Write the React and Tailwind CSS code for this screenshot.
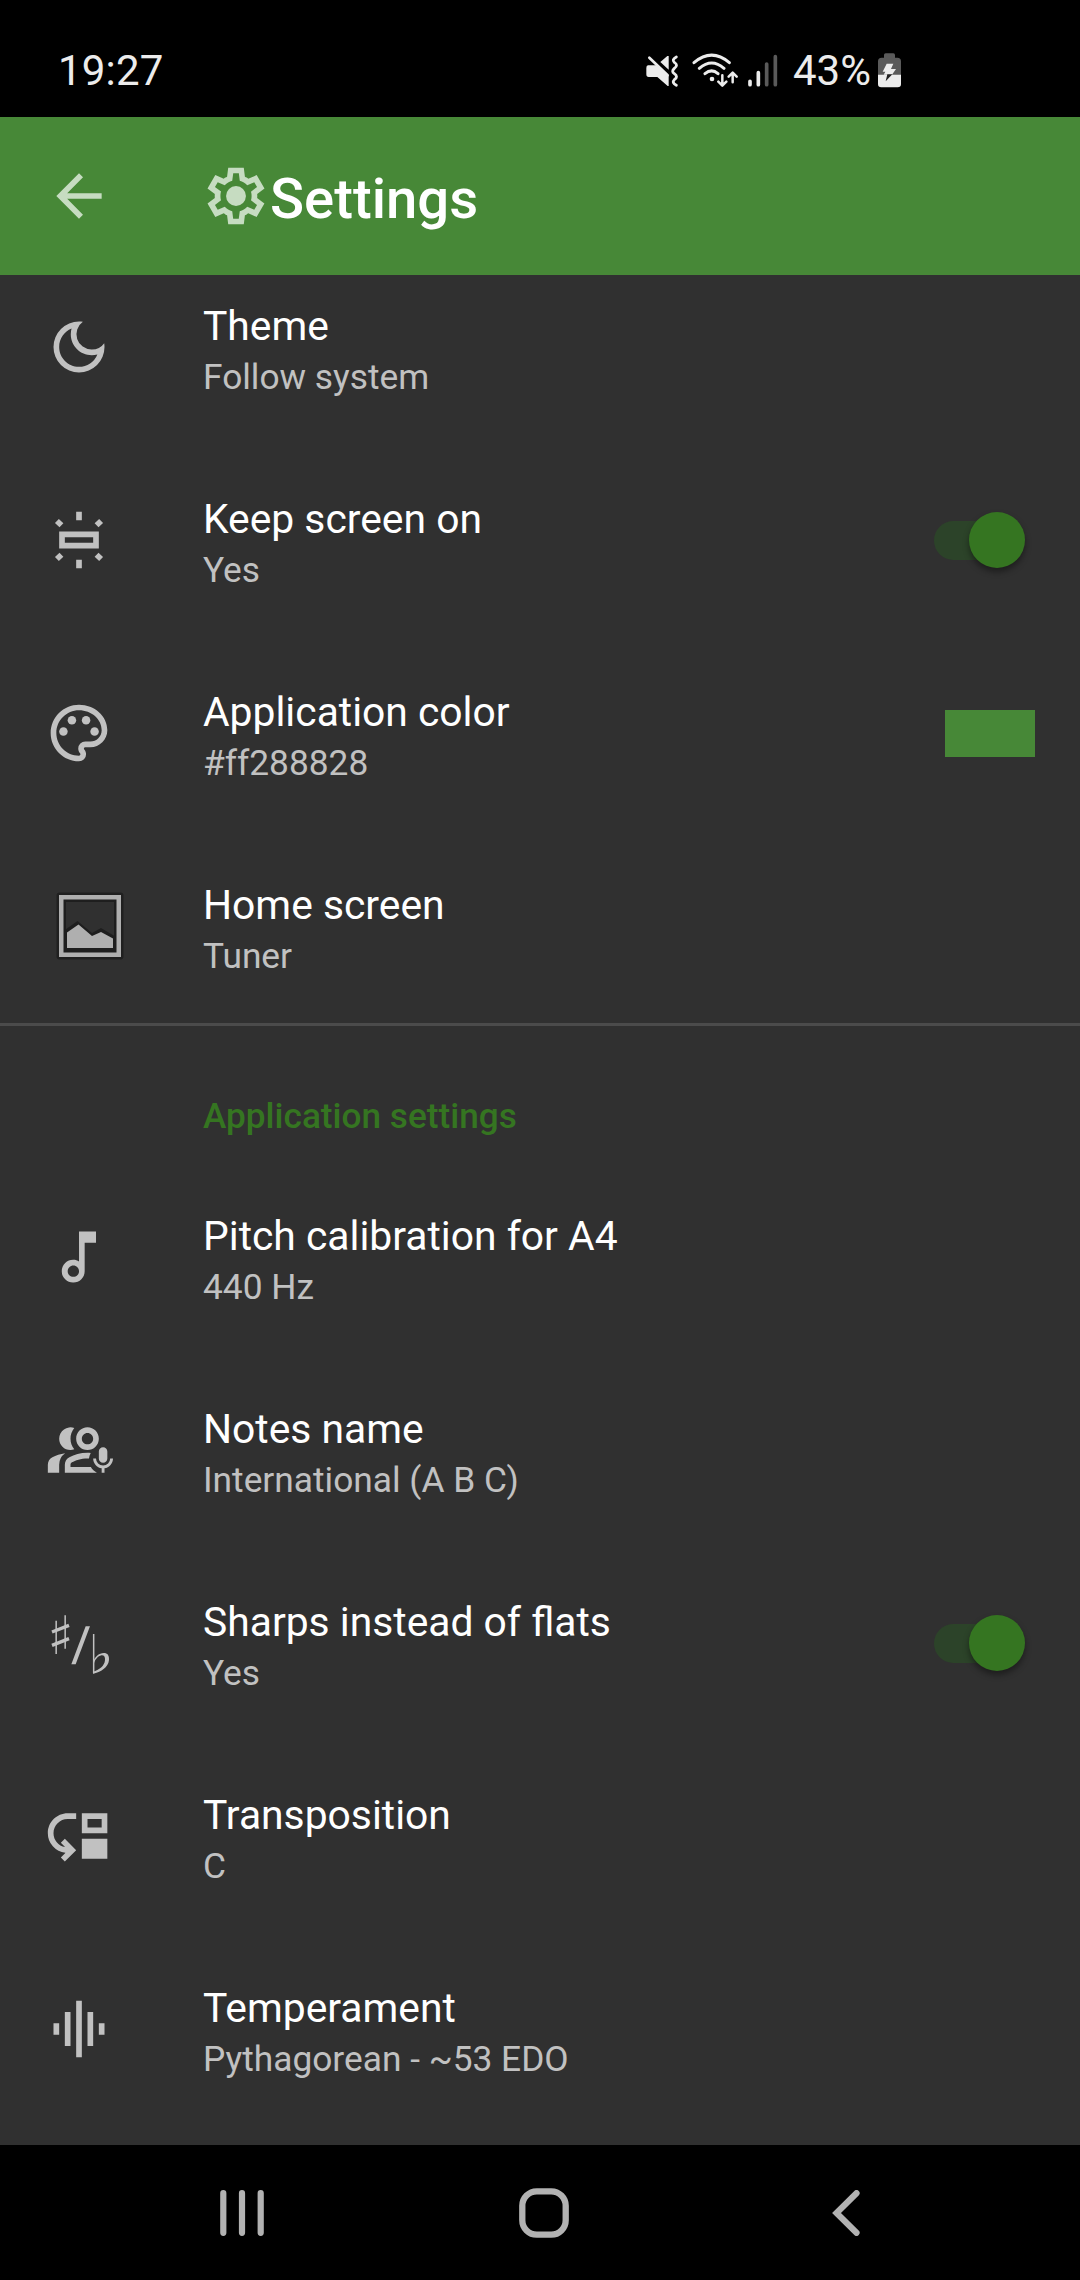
import React from "react";
import {
  MdArrowBack,
  MdOutlineDarkMode,
  MdOutlinePalette,
  MdOutlineMusicNote,
  MdOutlineInterpreterMode,
  MdOutlineMoveDown,
  MdGraphicEq,
} from "react-icons/md";

const ICON = "block h-[68px] w-[68px]";

function GearIcon() {
  return (
    <svg viewBox="0 0 24 24" className={ICON} fill="currentColor">
      <path
        fillRule="evenodd"
        d="m9.25 22-.4-3.2q-.325-.125-.612-.3-.288-.175-.563-.375L4.7 19.375l-2.75-4.75 2.575-1.95Q4.5 12.5 4.5 12.337v-.675q0-.162.025-.337L1.95 9.375l2.75-4.75 2.975 1.25q.275-.2.575-.375.3-.175.6-.3l.4-3.2h5.5l.4 3.2q.325.125.613.3.287.175.562.375l2.975-1.25 2.75 4.75-2.575 1.95q.025.175.025.337v.675q0 .163-.05.338l2.575 1.95-2.75 4.75-2.95-1.25q-.275.2-.575.375-.3.175-.6.3l-.4 3.2ZM11 20h1.975l.35-2.65q.775-.2 1.438-.588.662-.387 1.212-.937l2.475 1.025.975-1.7-2.15-1.625q.125-.35.175-.738.05-.387.05-.787t-.05-.788q-.05-.387-.175-.737l2.15-1.625-.975-1.7-2.475 1.05q-.55-.575-1.212-.963-.663-.387-1.438-.587L13 4h-1.975l-.35 2.65q-.775.2-1.437.587-.663.388-1.213.938L5.55 7.15l-.975 1.7 2.15 1.6q-.125.375-.175.75-.05.375-.05.8 0 .4.05.775t.175.75l-2.15 1.625.975 1.7 2.475-1.05q.55.575 1.213.962.662.388 1.437.588Z"
      />
      <circle cx="12" cy="12" r="3.5" />
    </svg>
  );
}

function ScreenOnIcon() {
  return (
    <svg viewBox="0 0 24 24" className={ICON} fill="none" stroke="currentColor" strokeWidth="2">
      <path d="M6 10h12v4H6zM12 2v3M12 19v3M4.2 5.3l1.6 1.5M19.8 5.3l-1.6 1.5M4.2 18.7l1.6-1.5M19.8 18.7l-1.6-1.5" />
    </svg>
  );
}

function GalleryIcon() {
  return (
    <svg viewBox="0 0 68 68" className="ml-[11px] block h-[68px] w-[68px]">
      <rect x="0.5" y="0.5" width="67" height="67" rx="3" fill="#202020" />
      <rect x="3" y="3" width="62" height="62" fill="#afafaf" />
      <rect x="7.5" y="7.5" width="53" height="53" fill="#1e1e1e" />
      <rect x="10" y="10" width="48" height="48" fill="#303030" />
      <path d="M9.500 37.500 21.500 29 36 41 45 36 58.500 44V59H9.500z" fill="#1e1e1e" />
      <path d="M11 40.500 22.500 32.500 36 44 45 40 57 46.500V56H11z" fill="#afafaf" />
    </svg>
  );
}

function SharpFlatIcon() {
  return (
    <svg viewBox="0 25 204 204" className={ICON} fill="none" stroke="currentColor">
      <path d="M33.500 60v100M60.500 44v100" strokeWidth="4.500" />
      <path d="M21 94 72 74M21 134 72 114" strokeWidth="10" />
      <path d="M79 191h13L135 77h-13z" fill="currentColor" stroke="none" />
      <path d="M146 100V218" strokeWidth="4.500" />
      <path
        d="M145 180C152 168 162 157 176 157 188 157 193 165 192 178 190 200 167 215 144 219V213C162 208 179 196 180 178 181 168 177 163 169 164 159 166 150 177 147 188z"
        fill="currentColor"
        stroke="none"
      />
    </svg>
  );
}

function Toggle() {
  return (
    <div className="mb-[1px] flex h-[57px] w-[91px] items-center rounded-full">
      <div className="h-[39px] w-[62px] rounded-l-full bg-[#2c4329]" />
      <div className="-ml-[27px] h-[56px] w-[56px] shrink-0 rounded-full bg-[#357521] shadow-[0_4px_6px_rgba(0,0,0,0.4)]" />
    </div>
  );
}

function Row({ icon, title, summary, end }) {
  return (
    <div className="flex h-[193px] shrink-0">
      <div className="flex w-[203px] shrink-0 items-center pb-[2px] pl-[45px] text-[#c1c1c1]">{icon}</div>
      <div className="flex grow flex-col gap-[6px] pt-[51px]">
        <div className="text-[40.8px] leading-[48px] text-white">{title}</div>
        <div className="text-[35.3px] leading-[42px] text-[#c1c1c1]">{summary}</div>
      </div>
      {end}
    </div>
  );
}

function StatusBar() {
  return (
    <div className="flex h-[117px] shrink-0 items-center pt-[24px] text-[42px] leading-[48px] text-[#ececec]">
      <div className="w-[646px] shrink-0 pl-[58px] tracking-[0.2px]">19:27</div>
      <svg viewBox="138 70 99 105" className="h-[35px] w-[33px]" fill="none" stroke="#ececec">
        <path
          d="M144 107h26L206 138V169H203L172 142H146Q139 142 139 134V115Q139 107 144 107z"
          fill="#ececec"
          stroke="none"
        />
        <path d="M181 97 202 79H206V120z" fill="#ececec" stroke="none" />
        <path d="M148 84 203 137" strokeWidth="8" strokeLinecap="round" />
        <path
          d="M229 82Q214 90 223 98 236 106 223 116 213 125 223 132 236 141 223 150 214 159 229 167"
          strokeWidth="8.500"
          strokeLinecap="round"
        />
      </svg>
      <svg
        viewBox="276 70 138 105"
        className="ml-[13px] h-[35px] w-[46px]"
        fill="none"
        stroke="#ececec"
        strokeWidth="9"
        strokeLinecap="round"
        strokeLinejoin="round"
      >
        <path d="M282 99Q335 54 388 99M298 116Q335 84 372 116M315 132Q335 115 354 132" />
        <circle cx="336" cy="148" r="7" fill="#ececec" stroke="none" />
        <path d="M367 137V167M355 156 367 168 379 156M398 158V130M386 141 398 129 410 141" strokeWidth="7.500" />
      </svg>
      <svg viewBox="441 70 93 105" className="ml-[9px] h-[35px] w-[31px]" strokeWidth="11" strokeLinecap="round">
        <path d="M450 155V165M475 129V165" stroke="#ececec" />
        <path d="M500 103V165M526 81V165" stroke="#5a5a5a" />
      </svg>
      <div className="ml-[15px] w-[84px]">43%</div>
      <svg viewBox="831 70 75 105" className="h-[35px] w-[25px]">
        <path d="M834 136V95Q834 84 845 84H852V76Q852 71 857 71H880Q885 71 885 76V84H892Q903 84 903 95V136z" fill="#5a5a5a" />
        <path d="M834 135H903V163Q903 173 893 173H844Q834 173 834 163z" fill="#ececec" />
        <path d="M860 102H880L873 118H888L876 135H851L856 126H848z" fill="#ececec" />
        <path d="M862 134H877L857 155z" fill="#202020" />
      </svg>
    </div>
  );
}

function NavBar() {
  return (
    <div className="flex h-[135px] shrink-0 items-center bg-black pl-[220px] text-[#b2b2b2]">
      <svg viewBox="0 0 44 46" className="h-[46px] w-[44px]" stroke="currentColor" strokeWidth="6.200" strokeLinecap="round">
        <path d="M3.300 3.200V42.800M22 3.200V42.800M40.700 3.200V42.800" />
      </svg>
      <svg viewBox="0 0 50 50" className="ml-[255px] h-[50px] w-[50px]" fill="none" stroke="currentColor" strokeWidth="6.300">
        <rect x="3.300" y="3.300" width="43.400" height="43.400" rx="14.500" />
      </svg>
      <svg
        viewBox="0 0 30 46"
        className="ml-[261px] h-[46px] w-[30px]"
        fill="none"
        stroke="currentColor"
        strokeWidth="6.200"
        strokeLinecap="round"
      >
        <path d="M26.500 3.200 6.500 23 26.500 42.800" />
      </svg>
    </div>
  );
}

export default function App() {
  return (
    <div className="flex h-[2280px] w-[1080px] flex-col overflow-hidden bg-black font-['Roboto',sans-serif]">
      <StatusBar />
      <div className="flex h-[158px] shrink-0 items-center bg-[#478837] pl-[45px] text-[#c6dcc1]">
        <MdArrowBack className={ICON} />
        <div className="ml-[89px]">
          <GearIcon />
        </div>
        <div className="mt-[6px] text-[56.25px] leading-[66px] font-medium text-white">Settings</div>
      </div>
      <div className="flex min-h-0 grow flex-col overflow-hidden bg-[#303030]">
        <div className="-mt-[24px] flex flex-col">
          <Row icon={<MdOutlineDarkMode className={ICON} />} title="Theme" summary="Follow system" />
          <Row
            icon={<ScreenOnIcon />}
            title="Keep screen on"
            summary="Yes"
            end={
              <div className="flex items-center pr-[55px]">
                <Toggle />
              </div>
            }
          />
          <Row
            icon={<MdOutlinePalette className={ICON} />}
            title="Application color"
            summary="#ff288828"
            end={
              <div className="flex items-center pr-[45px]">
                <div className="h-[47px] w-[90px] bg-[#478837]" />
              </div>
            }
          />
          <Row icon={<GalleryIcon />} title="Home screen" summary="Tuner" />
        </div>
        <div className="h-[3px] shrink-0 bg-[#4b4b4b]" />
        <div className="h-[135px] shrink-0 pt-[69px] pl-[203px] text-[35.2px] leading-[42px] font-medium text-[#357521]">
          Application settings
        </div>
        <Row icon={<MdOutlineMusicNote className={ICON} />} title="Pitch calibration for A4" summary="440 Hz" />
        <Row icon={<MdOutlineInterpreterMode className={ICON} />} title="Notes name" summary="International (A B C)" />
        <Row
          icon={<SharpFlatIcon />}
          title="Sharps instead of flats"
          summary="Yes"
          end={
            <div className="flex items-center pr-[55px]">
              <Toggle />
            </div>
          }
        />
        <Row icon={<MdOutlineMoveDown className={ICON} />} title="Transposition" summary="C" />
        <Row icon={<MdGraphicEq className={ICON} />} title="Temperament" summary="Pythagorean - ~53 EDO" />
      </div>
      <NavBar />
    </div>
  );
}
